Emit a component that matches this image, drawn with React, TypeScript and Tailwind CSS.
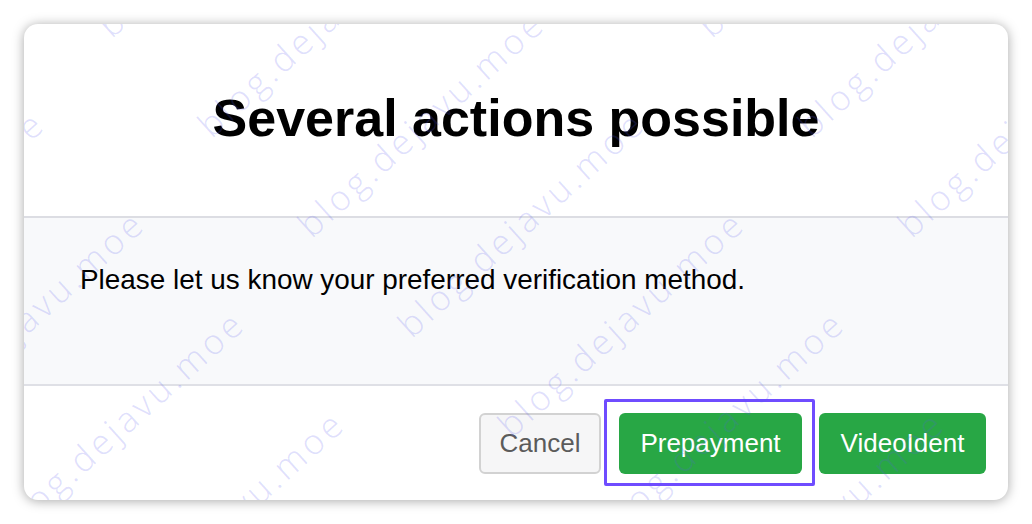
const font = { fontFamily: '"Liberation Sans", Arial, sans-serif' };

// watermark lattice (start points, relative to card)
const marks: { x: number; y: number }[] = [];
for (let k = -8; k <= 8; k++) {
  for (let m = -3; m <= 4; m++) {
    const x = -209 + 100 * k + 500 * m;
    const y = 319 + 100 * k - 100 * m;
    if (x < 984 && x + 260 > 0 && y > 0 && y - 240 < 476) marks.push({ x, y });
  }
}

const Watermark = () => (
  <div className="pointer-events-none absolute inset-0 overflow-hidden">
    {marks.map((p, i) => (
      <span
        key={i}
        className="absolute whitespace-nowrap text-[35px] leading-[36px] tracking-[4px] font-light text-[#5a5af0]/20 origin-bottom-left"
        style={{ left: p.x, top: p.y - 36, transform: 'rotate(-42deg)', fontFamily: '"Open Sans", sans-serif' }}
      >
        blog.dejavu.moe
      </span>
    ))}
  </div>
);

const App = () => {
  return (
    <div className="w-[1032px] h-[524px] bg-white p-[24px]" style={font}>
      <div className="relative w-[984px] h-[476px] rounded-[14px] bg-white overflow-hidden shadow-[0_1px_12px_rgba(0,0,0,0.35)] flex flex-col">
        {/* Header */}
        <div className="h-[194px] flex items-center justify-center pb-[4px] border-b-2 border-[#dcdde3]">
          <h2 className="text-[52px] font-bold text-black leading-none">Several actions possible</h2>
        </div>

        {/* Body */}
        <div className="h-[168px] bg-[#f8f9fb] border-b-2 border-[#dfe0e6] pl-[56px] pt-[42px]">
          <p className="text-[27.9px] leading-[40px] text-black">Please let us know your preferred verification method.</p>
        </div>

        {/* Footer */}
        <div className="flex-1 flex justify-end items-start gap-[17px] pt-[27px] pr-[22px]">
          <button className="h-[61px] w-[122px] rounded-[6px] border-2 border-[#d2d2d2] bg-[#f6f6f7] text-[26px] text-[#5b5b5b]">
            Cancel
          </button>
          <div className="relative ml-[1px]">
            <button className="h-[61px] w-[183px] rounded-[6px] bg-[#28a745] text-[26px] text-white">
              Prepayment
            </button>
            <div className="absolute -left-[15px] -top-[14px] -right-[13px] -bottom-[12px] border-[3px] border-[#6f4cff] rounded-[2px]" />
          </div>
          <button className="h-[61px] w-[167px] rounded-[6px] bg-[#28a745] text-[26px] text-white">
            VideoIdent
          </button>
        </div>

        <Watermark />
      </div>
    </div>
  );
};

export default App;
